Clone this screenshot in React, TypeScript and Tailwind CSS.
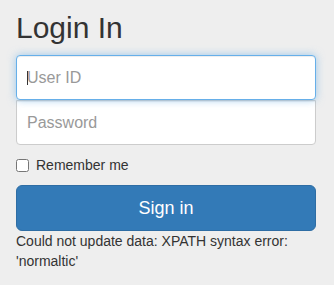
import React from "react";

export default function App() {
  return (
    <div
      className="w-[334px] h-[285px] bg-[#eeeeee] text-[#333333] overflow-hidden"
      style={{ fontFamily: '"Liberation Sans", Arial, sans-serif' }}
    >
      <div className="ml-4 w-[300px] pt-[11px]">
        <h2 className="h-[33px] text-[30px] leading-[33px] font-normal mb-[11px]">Login In</h2>
        <div className="relative">
          <input
            type="text"
            placeholder="User ID"
            className="block w-full h-[45px] px-[10px] text-[16px] bg-white border border-[#66afe9] rounded-[4px] outline-none placeholder:text-[#999999] shadow-[inset_0_1px_1px_rgba(0,0,0,0.075),0_0_8px_rgba(102,175,233,0.6)] relative z-10"
          />
          <span className="absolute z-20 left-[11px] top-[16px] w-px h-[14px] bg-[#333333]" />
        </div>
        <input
          type="password"
          placeholder="Password"
          className="block w-full h-[45px] px-[10px] text-[16px] bg-white border border-[#cccccc] rounded-b-[4px] outline-none placeholder:text-[#999999] shadow-[inset_0_1px_1px_rgba(0,0,0,0.075)]"
        />
        <label className="mt-[10px] h-[20px] flex items-center text-[14px] leading-[20px]">
          <input type="checkbox" className="m-0 w-[13px] h-[13px]" />
          <span className="ml-[7px]">Remember me</span>
        </label>
        <button className="mt-[10px] w-full h-[46px] bg-[#337ab7] border border-[#2e6da4] rounded-[6px] text-white text-[18px] leading-[24px]">
          Sign in
        </button>
        <p className="text-[14px] leading-[20px]">
          Could not update data: XPATH syntax error: 'normaltic'
        </p>
      </div>
    </div>
  );
}
